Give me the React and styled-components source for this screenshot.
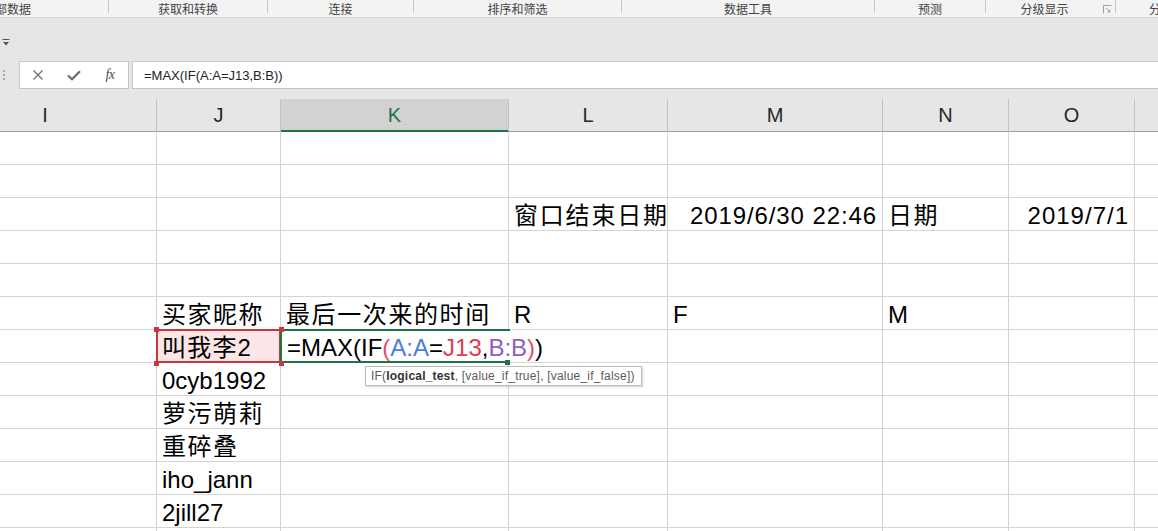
import React from "react";
import styled, { createGlobalStyle } from "styled-components";

const GlobalStyle = createGlobalStyle`
  html, body {
    margin: 0;
    padding: 0;
    background: #fff;
    overflow: hidden;
  }
  body {
    font-family: "Liberation Sans", "Noto Sans CJK SC", sans-serif;
  }
`;

const Window = styled.div`
  width: 1158px;
  height: 531px;
  overflow: hidden;
  background: #fff;
`;

const Ribbon = styled.div`
  display: flex;
  height: 17px;
  background: #f3f3f3;
  border-bottom: 1px solid #d5d5d5;
  font-family: "Noto Sans CJK SC", sans-serif;
  font-size: 12px;
  color: #444;
  overflow: hidden;
`;

const GroupLabel = styled.div`
  flex: 0 0 ${(p) => p.$w}px;
  box-sizing: border-box;
  display: flex;
  align-items: center;
  justify-content: ${(p) => p.$justify || "center"};
  padding-left: ${(p) => p.$pl || 0}px;
  padding-right: ${(p) => p.$pr || 0}px;
  white-space: nowrap;
  overflow: hidden;
  position: relative;
  line-height: 14px;
`;

const Sep = styled.span`
  flex: 0 0 1px;
  height: 13px;
  background: #c8c8c8;
`;

const Launcher = styled.svg`
  position: absolute;
  right: 3px;
  top: 5px;
`;

const Chrome = styled.div`
  background: #e6e6e6;
  height: 81px;
  display: flex;
  flex-direction: column;
`;

const QuickAccess = styled.div`
  height: 43px;
  padding: 14px 0 0 2px;
  box-sizing: border-box;
`;

const FormulaRow = styled.div`
  display: flex;
  height: 28px;
`;

const Grip = styled.div`
  flex: 0 0 19px;
  display: flex;
  flex-direction: column;
  justify-content: center;
  gap: 2px;
  padding-left: 3px;
  box-sizing: border-box;
`;

const Dot = styled.span`
  width: 2px;
  height: 2px;
  background: #a8a8a8;
`;

const ButtonBox = styled.div`
  flex: 0 0 110px;
  box-sizing: border-box;
  display: flex;
  background: #fff;
  border: 1px solid #c6c6c6;
`;

const FxButton = styled.div`
  flex: 0 0 36px;
  display: flex;
  align-items: center;
  justify-content: center;
  color: #6f6f6f;
`;

const FxText = styled.span`
  font-family: "Liberation Serif", serif;
  font-style: italic;
  font-size: 14px;
  color: #4d4d4d;
  letter-spacing: -0.5px;
`;

const FormulaInput = styled.div`
  flex: 1;
  margin-left: 3px;
  background: #fff;
  border: 1px solid #c6c6c6;
  border-right: none;
  display: flex;
  align-items: center;
  padding-left: 11px;
  font-size: 13px;
  color: #222;
`;

const Sheet = styled.div`
  display: grid;
  grid-template-columns: 223px 124px 228px 159px 215px 126px 126px 120px;
  grid-auto-rows: 33px;
  margin-left: -66px;
`;

const ColHeader = styled.div`
  box-sizing: border-box;
  display: flex;
  align-items: center;
  justify-content: center;
  font-size: 20px;
  color: ${(p) => (p.$active ? "#217346" : "#262626")};
  background: ${(p) => (p.$active ? "#d2d2d2" : "#e6e6e6")};
  border-right: 1px solid #c3c3c3;
  border-bottom: 1px solid ${(p) => (p.$active ? "#217346" : "#9e9e9e")};
  box-shadow: ${(p) => (p.$active ? "inset 0 -1px 0 #217346" : "none")};
`;

const Cell = styled.div`
  box-sizing: border-box;
  position: relative;
  display: flex;
  align-items: flex-end;
  justify-content: ${(p) => (p.$right ? "flex-end" : "flex-start")};
  padding: 0 5px 2px;
  border-right: 1px solid #d4d4d4;
  border-bottom: 1px solid #d4d4d4;
  background: ${(p) => (p.$ref ? "#fbe5e6" : "transparent")};
  font-size: 24px;
  line-height: 1;
  letter-spacing: ${(p) => p.$ls || 0}px;
  color: #000;
  white-space: nowrap;
`;

const RefBox = styled.span`
  position: absolute;
  top: -1px;
  left: -1px;
  right: -1px;
  bottom: -1px;
  border: 2px solid #c4393f;
  pointer-events: none;
`;

const Knob = styled.span`
  position: absolute;
  width: 5px;
  height: 5px;
  background: ${(p) => p.$color};
  z-index: 3;
`;

const Editor = styled.div`
  position: absolute;
  top: -1px;
  left: -1px;
  width: 230px;
  height: 34px;
  box-sizing: border-box;
  background: #fff;
  border: 2px solid #217346;
  border-right: none;
  z-index: 2;
  display: flex;
  align-items: flex-end;
  padding: 0 0 1px 5px;
  font-size: 24px;
  line-height: 1;
  white-space: nowrap;
`;

const Tok = styled.span`
  color: ${(p) => p.$c || "#000"};
`;

const Caret = styled.span`
  display: inline-block;
  width: 1px;
  height: 30px;
  background: #000;
  margin-bottom: -1px;
`;

const Tooltip = styled.div`
  position: absolute;
  left: 84px;
  top: 36px;
  z-index: 4;
  height: 20px;
  box-sizing: border-box;
  background: #fff;
  border: 1px solid #bdbdbd;
  box-shadow: 1px 1px 2px rgba(0, 0, 0, 0.18);
  padding: 0 6px 0 5px;
  display: flex;
  align-items: center;
  font-size: 12px;
  color: #5b5b5b;
  white-space: nowrap;
  letter-spacing: 0.2px;
`;

const Bold = styled.b`
  color: #333;
`;

const columns = ["I", "J", "K", "L", "M", "N", "O", "P"];

const rows = [
  {},
  {},
  {
    3: { t: "窗口结束日期", ls: 1.8 },
    4: { t: "2019/6/30 22:46", right: true, ls: 0.9 },
    5: { t: "日期", ls: 1.5 },
    6: { t: "2019/7/1", right: true, ls: 1 },
  },
  {},
  {},
  {
    1: { t: "买家昵称", ls: 1.5 },
    2: { t: "最后一次来的时间", ls: 1.6 },
    3: { t: "R" },
    4: { t: "F" },
    5: { t: "M" },
  },
  { 1: { t: "叫我李2", ref: true, ls: 1.2 }, 2: { editor: true } },
  { 1: { t: "0cyb1992" } },
  { 1: { t: "萝污萌莉", ls: 1.5 } },
  { 1: { t: "重碎叠", ls: 1.5 } },
  { 1: { t: "iho_jann" } },
  { 1: { t: "2jill27" } },
  {},
];

const CloseIcon = () => (
  <svg width="12" height="12" viewBox="0 0 12 12">
    <path d="M1.5 1.5 L10.5 10.5 M10.5 1.5 L1.5 10.5" stroke="#727272" strokeWidth="1.4" fill="none" />
  </svg>
);

const CheckIcon = () => (
  <svg width="14" height="11" viewBox="0 0 14 11">
    <path d="M1 5.5 L5 9.2 L13 1.2" stroke="#6c6c6c" strokeWidth="2.2" fill="none" />
  </svg>
);

const EditorContent = () => (
  <Editor>
    <Tok>=MAX(IF</Tok>
    <Tok $c="#e2506b">(</Tok>
    <Tok $c="#4a7fd6">A:A</Tok>
    <Caret />
    <Tok>=</Tok>
    <Tok $c="#e23a4e">J13</Tok>
    <Tok>,</Tok>
    <Tok $c="#8c5fc8">B:B</Tok>
    <Tok $c="#e2506b">)</Tok>
    <Tok>)</Tok>
  </Editor>
);

const App = () => {
  return (
    <Window>
      <GlobalStyle />
      <Ribbon>
        <GroupLabel $w={108} $justify="flex-end" $pr={77}>获取外部数据</GroupLabel>
        <Sep />
        <GroupLabel $w={158}>获取和转换</GroupLabel>
        <Sep />
        <GroupLabel $w={145}>连接</GroupLabel>
        <Sep />
        <GroupLabel $w={207}>排序和筛选</GroupLabel>
        <Sep />
        <GroupLabel $w={252}>数据工具</GroupLabel>
        <Sep />
        <GroupLabel $w={110}>预测</GroupLabel>
        <Sep />
        <GroupLabel $w={129} $pr={12}>
          分级显示
          <Launcher width="9" height="9" viewBox="0 0 9 9">
            <path d="M0.5 8.5 V0.5 H8.5" stroke="#a0a0a0" fill="none" />
            <path d="M3 3 L7 7 M7 4.5 V7 H4.5" stroke="#a0a0a0" fill="none" />
          </Launcher>
        </GroupLabel>
        <Sep />
        <GroupLabel $w={80} $pl={10}>分析</GroupLabel>
      </Ribbon>
      <Chrome>
        <QuickAccess>
          <svg width="8" height="7" viewBox="0 0 8 7">
            <path d="M0.5 0.5 H7.5" stroke="#555" />
            <path d="M1 3 H7 L4 6.5 Z" fill="#555" />
          </svg>
        </QuickAccess>
        <FormulaRow>
          <Grip>
            <Dot />
            <Dot />
            <Dot />
          </Grip>
          <ButtonBox>
            <FxButton>
              <CloseIcon />
            </FxButton>
            <FxButton>
              <CheckIcon />
            </FxButton>
            <FxButton>
              <FxText>fx</FxText>
            </FxButton>
          </ButtonBox>
          <FormulaInput>=MAX(IF(A:A=J13,B:B))</FormulaInput>
        </FormulaRow>
      </Chrome>
      <Sheet>
        {columns.map((c) => (
          <ColHeader key={c} $active={c === "K"}>
            {c}
          </ColHeader>
        ))}
        {rows.map((row, r) =>
          columns.map((c, i) => {
            const cell = row[i];
            if (!cell) return <Cell key={`${r}-${c}`} />;
            if (cell.editor) {
              return (
                <Cell key={`${r}-${c}`}>
                  <EditorContent />
                  <Knob $color="#217346" style={{ left: 224, top: 30 }} />
                  <Tooltip>
                    IF(<Bold>logical_test</Bold>, [value_if_true], [value_if_false])
                  </Tooltip>
                </Cell>
              );
            }
            return (
              <Cell key={`${r}-${c}`} $right={cell.right} $ls={cell.ls} $ref={cell.ref}>
                {cell.t}
                {cell.ref && (
                  <>
                    <RefBox />
                    <Knob $color="#c4393f" style={{ left: -3, top: -3 }} />
                    <Knob $color="#c4393f" style={{ right: -4, top: -3 }} />
                    <Knob $color="#c4393f" style={{ left: -3, bottom: -4 }} />
                    <Knob $color="#c4393f" style={{ right: -4, bottom: -4 }} />
                  </>
                )}
              </Cell>
            );
          })
        )}
      </Sheet>
    </Window>
  );
};

export default App;
